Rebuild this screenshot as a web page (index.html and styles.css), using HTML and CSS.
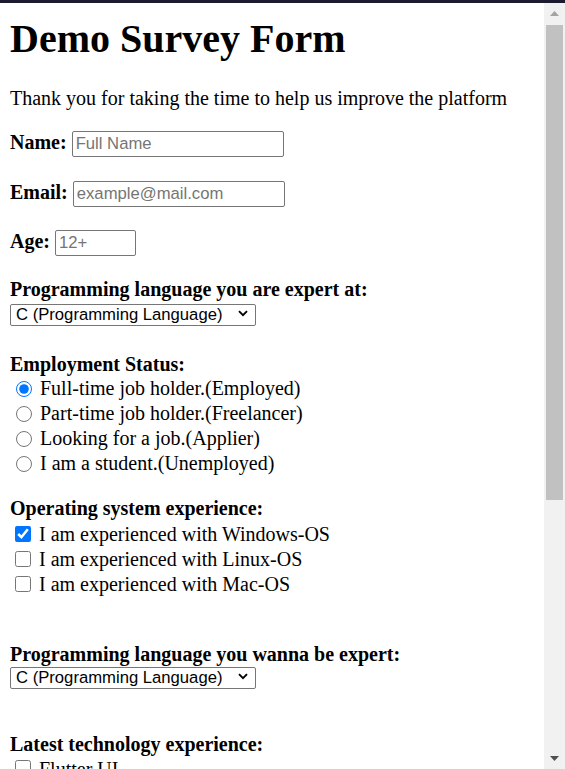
FILE: index.html
```html
<!DOCTYPE html>
<html lang="en">
<head>
<meta charset="utf-8">
<title>Demo Survey Form</title>
<link rel="stylesheet" href="styles.css">
</head>
<body>
<div class="topbar"></div>
<main class="page">
  <h1 class="title" id="title">Demo Survey Form</h1>
  <p class="intro" id="description">Thank you for taking the time to help us improve the platform</p>
  <form class="survey" id="survey-form">
    <div class="row row-first">
      <label class="lbl" for="name">Name:</label>
      <input class="text text-wide" type="text" id="name" placeholder="Full Name">
    </div>
    <div class="row">
      <label class="lbl" for="email">Email:</label>
      <input class="text text-wide" type="email" id="email" placeholder="example@mail.com">
    </div>
    <div class="row">
      <label class="lbl" for="number">Age:</label>
      <input class="text text-age" type="number" id="number" placeholder="12+">
    </div>

    <div class="section sec-select">
      <label class="lbl block" for="dropdown">Programming language you are expert at:</label>
      <div class="select-wrap">
        <select class="select" id="dropdown">
          <option>C (Programming Language)</option>
          <option>C++</option>
          <option>Java</option>
          <option>Python</option>
          <option>JavaScript</option>
        </select>
        <svg class="chev" width="10" height="7" viewBox="0 0 10 7" aria-hidden="true"><polyline points="1,1.2 5,5.2 9,1.2" fill="none" stroke="#000" stroke-width="1.9"/></svg>
      </div>
    </div>

    <div class="section sec-employment">
      <div class="lbl block">Employment Status:</div>
      <label class="opt"><input class="radio" type="radio" name="status" checked>Full-time job holder.(Employed)</label>
      <label class="opt"><input class="radio" type="radio" name="status">Part-time job holder.(Freelancer)</label>
      <label class="opt"><input class="radio" type="radio" name="status">Looking for a job.(Applier)</label>
      <label class="opt"><input class="radio" type="radio" name="status">I am a student.(Unemployed)</label>
    </div>

    <div class="section sec-os">
      <div class="lbl block">Operating system experience:</div>
      <div class="opts">
        <label class="opt"><input class="check" type="checkbox" checked>I am experienced with Windows-OS</label>
        <label class="opt"><input class="check" type="checkbox">I am experienced with Linux-OS</label>
        <label class="opt"><input class="check" type="checkbox">I am experienced with Mac-OS</label>
      </div>
    </div>

    <div class="section sec-wanna">
      <label class="lbl block" for="dropdown2">Programming language you wanna be expert:</label>
      <div class="select-wrap select-wrap-tight">
        <select class="select" id="dropdown2">
          <option>C (Programming Language)</option>
          <option>C++</option>
          <option>Java</option>
          <option>Python</option>
          <option>JavaScript</option>
        </select>
        <svg class="chev" width="10" height="7" viewBox="0 0 10 7" aria-hidden="true"><polyline points="1,1.2 5,5.2 9,1.2" fill="none" stroke="#000" stroke-width="1.9"/></svg>
      </div>
    </div>

    <div class="section sec-latest">
      <div class="lbl block">Latest technology experience:</div>
      <div class="opts">
        <label class="opt"><input class="check" type="checkbox">Flutter UI</label>
        <label class="opt"><input class="check" type="checkbox">React Native</label>
        <label class="opt"><input class="check" type="checkbox">Machine Learning</label>
        <label class="opt"><input class="check" type="checkbox">Blockchain</label>
      </div>
    </div>

    <div class="section sec-comments">
      <label class="lbl block" for="comments">Any comments or suggestions?</label>
      <textarea class="area" id="comments" placeholder="Enter your comment here..."></textarea>
    </div>

    <div class="section sec-submit">
      <button class="submit" type="submit" id="submit">Submit</button>
    </div>
  </form>
</main>

<div class="scrollbar" aria-hidden="true">
  <div class="sb-btn">
    <svg width="9" height="5" viewBox="0 0 9 5"><polygon points="0,5 4.5,0 9,5" fill="#a3a3a3"/></svg>
  </div>
  <div class="sb-track">
    <div class="sb-thumb"></div>
  </div>
  <div class="sb-btn">
    <svg width="9" height="5" viewBox="0 0 9 5"><polygon points="0,0 4.5,5 9,0" fill="#505050"/></svg>
  </div>
</div>
</body>
</html>
```

FILE: styles.css
```css
html, body {
  margin: 0;
}

body {
  background: #ffffff;
  color: #000000;
  font-family: "Liberation Serif", "Times New Roman", serif;
  font-size: 20px;
}

.topbar {
  height: 3px;
  background: #1c1b2e;
}

.page {
  padding: 0 31px 60px 10px;
}

.title {
  margin: 12.5px 0 25px;
  font-size: 40px;
  line-height: 46px;
  font-weight: bold;
}

.intro {
  margin: 0 0 21.5px;
  line-height: 23px;
}

.lbl {
  font-weight: bold;
  line-height: 23px;
}

.block {
  display: block;
}

.row {
  display: flex;
  align-items: baseline;
  gap: 5px;
  margin-top: 23.5px;
}

.row-first {
  margin-top: 0;
}

.text {
  box-sizing: border-box;
  height: 26px;
  margin: 0;
  padding: 2px 3px;
  border: 1px solid #767676;
  border-radius: 2px;
  font-family: "Liberation Sans", Arial, sans-serif;
  font-size: 16.67px;
  color: #000000;
  background: #ffffff;
}

.text::placeholder {
  color: #757575;
}

.text-wide {
  width: 212px;
}

.text-age {
  width: 81px;
}

.select-wrap {
  position: relative;
  width: 246px;
  margin-top: 2.5px;
}

.select-wrap-tight {
  margin-top: 1px;
}

.select {
  display: block;
  box-sizing: border-box;
  width: 246px;
  height: 22px;
  margin: 0;
  padding: 0 24px 0 5px;
  -webkit-appearance: none;
  appearance: none;
  font-family: "Liberation Sans", Arial, sans-serif;
  font-size: 16.67px;
  line-height: 20px;
  color: #000000;
  background: #ffffff;
  border: 1px solid #767676;
  border-radius: 2px;
}

.chev {
  position: absolute;
  top: 6px;
  right: 8px;
  pointer-events: none;
}

.section {
  margin-top: 23.5px;
}

.sec-select {
  margin-top: 22px;
}

.sec-employment {
  margin-top: 27px;
}

.sec-os {
  margin-top: 21.5px;
}

.sec-os .opts {
  margin-top: 2px;
}

.sec-latest .opts {
  margin-top: 1px;
}

.sec-wanna {
  margin-top: 46px;
}

.sec-latest {
  margin-top: 43.5px;
}

.opt {
  display: flex;
  align-items: center;
  height: 25px;
  line-height: 23px;
}

.radio {
  flex: none;
  width: 16px;
  height: 16px;
  margin: 1px 8px 0 6px;
}

.check {
  flex: none;
  width: 16px;
  height: 16px;
  margin: 0 8px 2px 5px;
}

.area {
  display: block;
  box-sizing: border-box;
  width: 300px;
  height: 110px;
  margin-top: 3px;
  padding: 3px;
  font-family: "Liberation Mono", monospace;
  font-size: 16.67px;
  border: 1px solid #767676;
  border-radius: 2px;
}

.submit {
  font-family: "Liberation Sans", Arial, sans-serif;
  font-size: 16.67px;
  padding: 2px 8px;
}

.scrollbar {
  position: fixed;
  top: 3px;
  right: 0;
  bottom: 0;
  width: 21px;
  display: flex;
  flex-direction: column;
  background: #f1f1f1;
}

.sb-btn {
  flex: none;
  height: 21px;
  display: flex;
  align-items: center;
  justify-content: center;
}

.sb-btn svg {
  display: block;
}

.sb-track {
  flex: 1;
  padding: 1px 2px 0;
}

.sb-thumb {
  height: 475px;
  background: #c1c1c1;
}
```
